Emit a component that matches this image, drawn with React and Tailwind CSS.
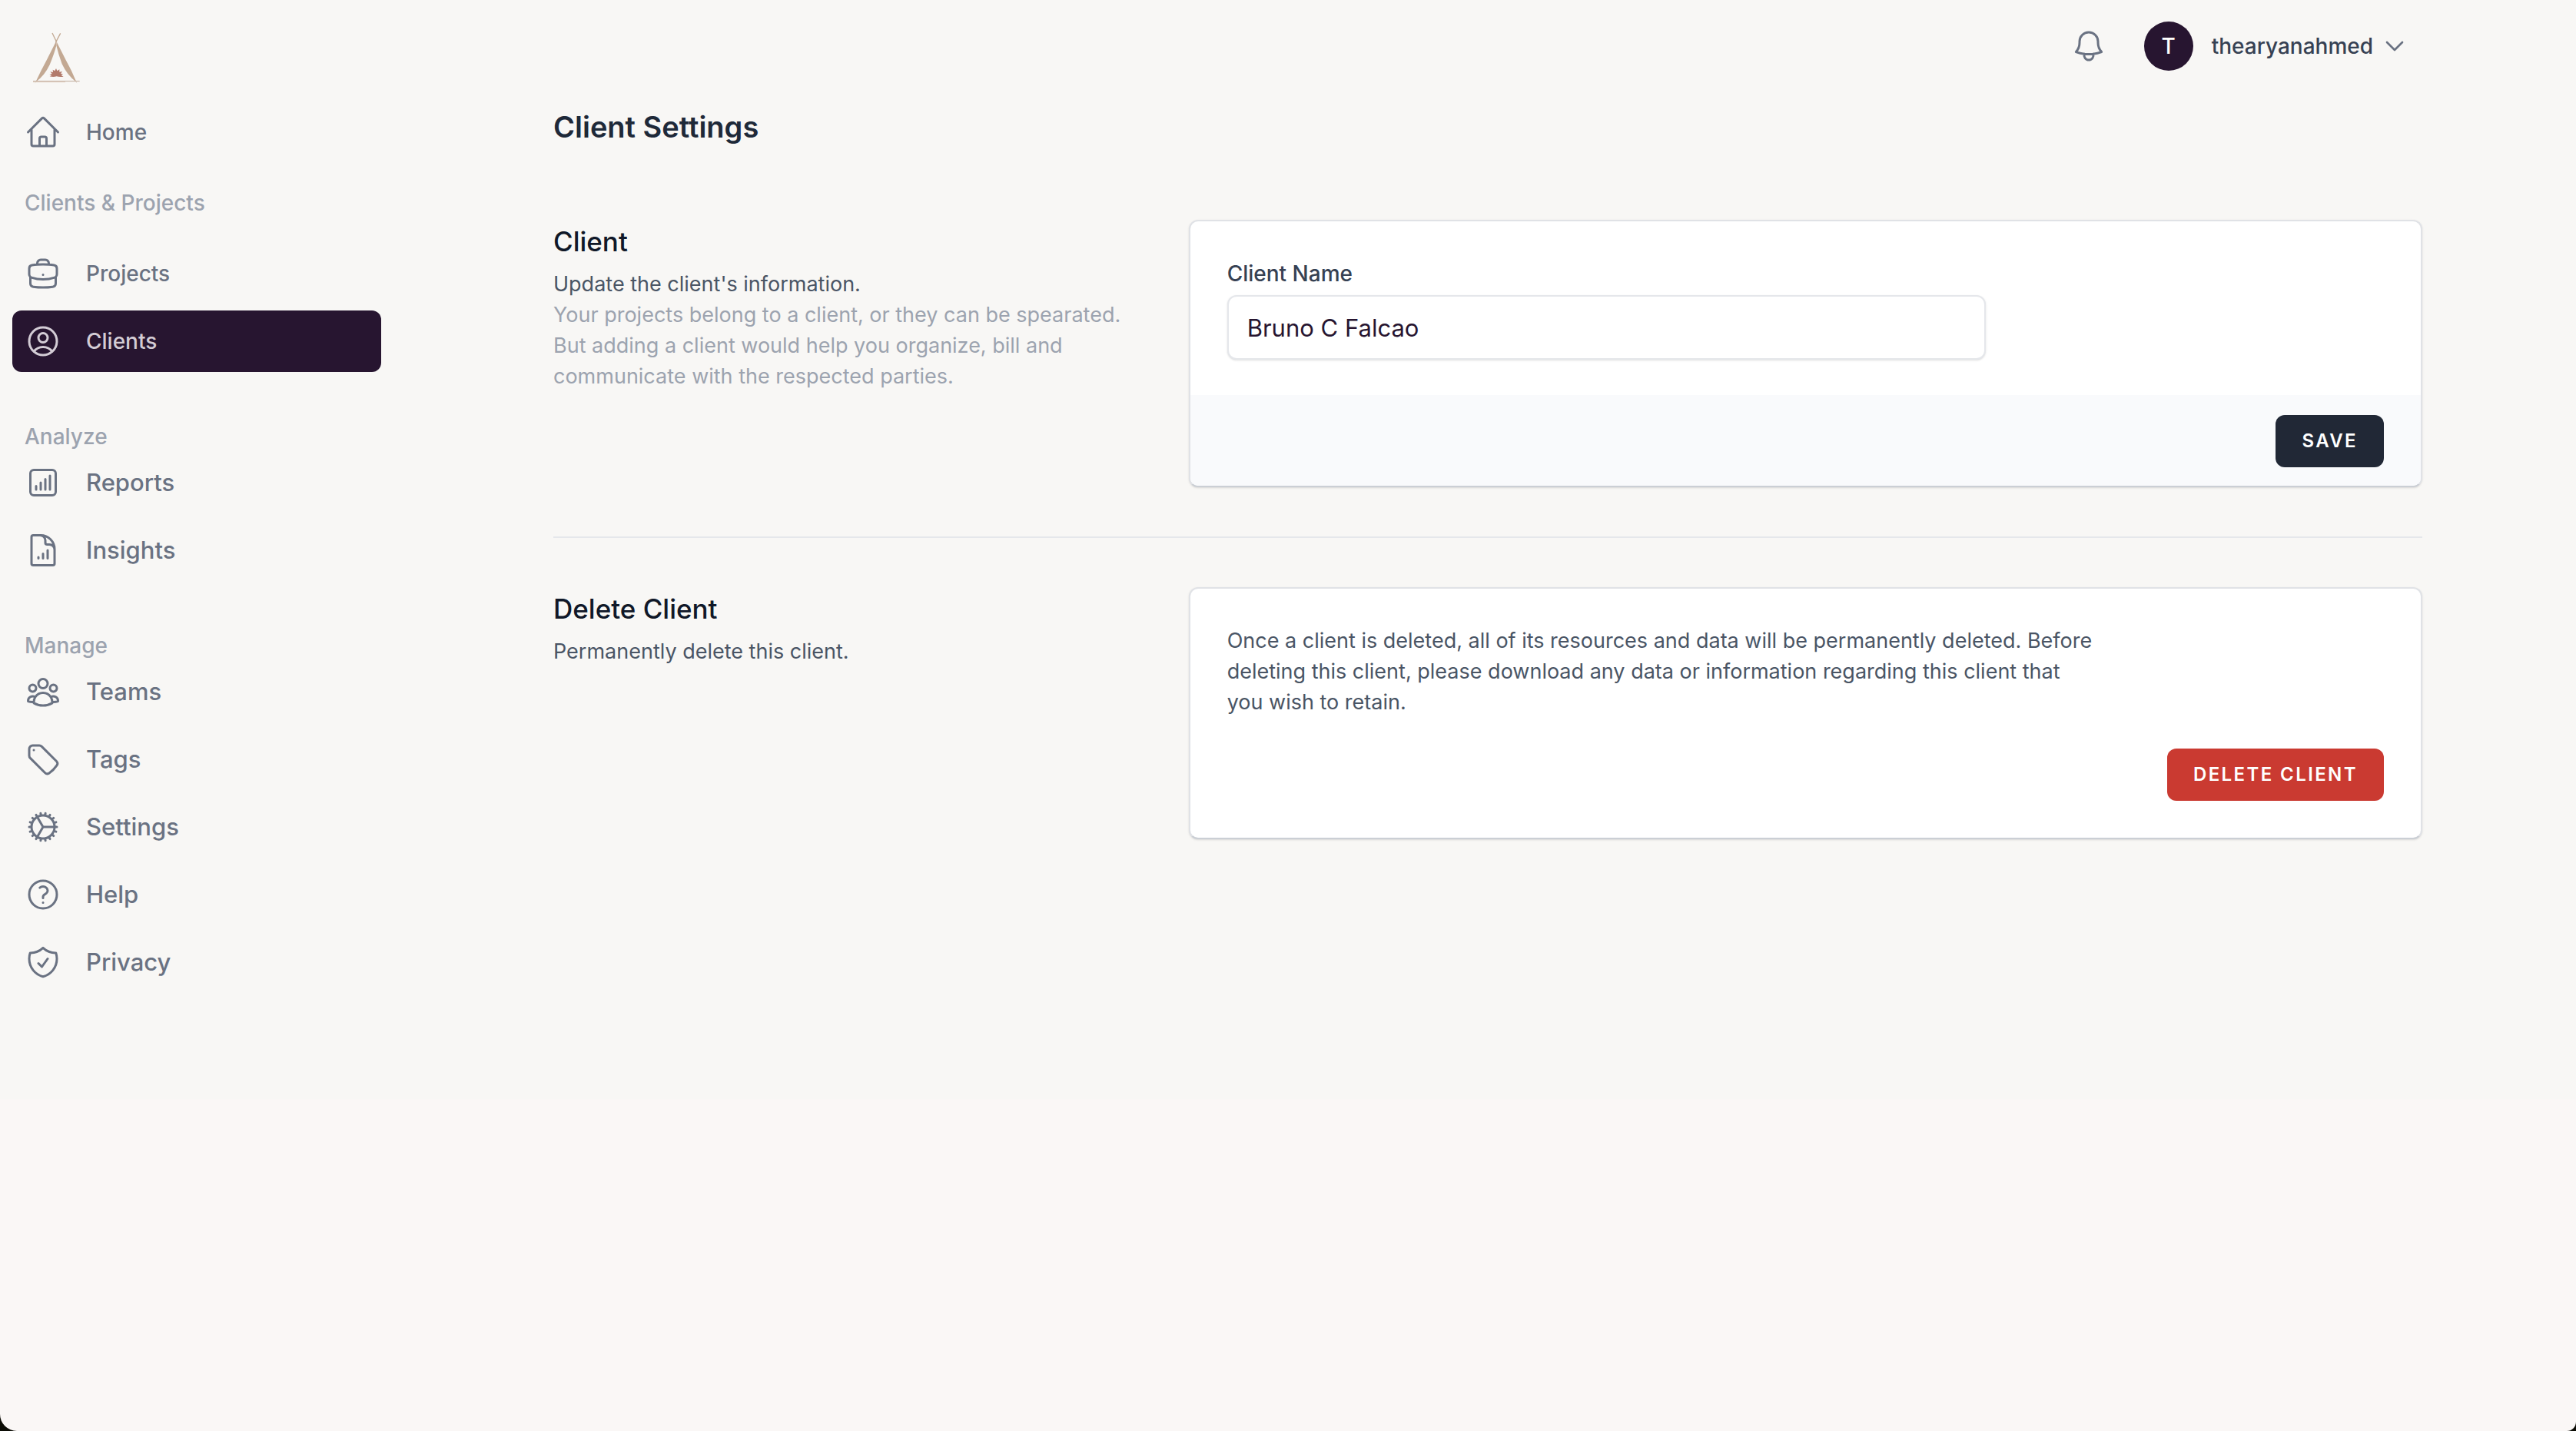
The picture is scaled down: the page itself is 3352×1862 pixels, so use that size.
import {
  HiOutlineHome,
  HiOutlineBriefcase,
  HiOutlineUserCircle,
  HiOutlineChartBarSquare,
  HiOutlineDocumentChartBar,
  HiOutlineUserGroup,
  HiOutlineTag,
  HiOutlineCog,
  HiOutlineQuestionMarkCircle,
  HiOutlineShieldCheck,
  HiOutlineBell,
  HiOutlineChevronDown,
} from "react-icons/hi2";

const analyze = [
  { label: "Reports", Icon: HiOutlineChartBarSquare },
  { label: "Insights", Icon: HiOutlineDocumentChartBar },
];

const manage = [
  { label: "Teams", Icon: HiOutlineUserGroup },
  { label: "Tags", Icon: HiOutlineTag },
  { label: "Settings", Icon: HiOutlineCog },
  { label: "Help", Icon: HiOutlineQuestionMarkCircle },
  { label: "Privacy", Icon: HiOutlineShieldCheck },
];

function Logo() {
  return (
    <svg viewBox="6 6 240 240" className="ml-8 size-20" fill="none" aria-hidden="true">
      <path d="M114 39 L131 74 M146 40 L127 76" stroke="#c3a993" strokeWidth="4" />
      <path d="M129 71 L92 145 Q80 168 70 187 L46 236 L51 229 Q84 205 104 163 Q121 122 130 88 Z" fill="#c3a993" />
      <path d="M130 71 L168 146 Q180 168 189 187 L211 236 L206 229 Q172 203 152 160 Q138 122 130 88 Z" fill="#c3a993" />
      <path d="M39 227 H221" stroke="#bfa999" strokeWidth="3" />
      <path d="M39 230 H165" stroke="#dccabb" strokeWidth="3" />
      <path
        d="M104 208 L112 204 L103 201 L113 198 L106 190 L117 192 L116 182 L124 187 L129 177 L133 187 L142 181 L142 191 L153 189 L147 197 L156 199 L149 204 L158 209 Q143 212 131 208 Q118 212 104 208 Z"
        fill="#b27a6b"
      />
    </svg>
  );
}

function NavItem({ label, Icon, active = false, small = false }) {
  return (
    <a
      href="#"
      aria-current={active ? "page" : undefined}
      className={`flex h-20 items-center gap-8 rounded-xl px-4 font-medium ${
        small ? "text-[28px]" : "text-[31px]"
      } ${active ? "bg-[#271530] text-[#d3ccd5]" : "text-gray-500"}`}
    >
      <Icon className="size-12 shrink-0" />
      {label}
    </a>
  );
}

function NavHeading({ children }) {
  return <h2 className="px-4 text-[28px] leading-10 font-medium text-[#9ca3af]">{children}</h2>;
}

function Sidebar() {
  return (
    <aside className="w-[512px] shrink-0 px-4 pt-8 pb-[138px]">
      <div className="-ml-4 mb-5">
        <Logo />
      </div>
      <nav className="flex flex-col gap-16">
        <div className="flex flex-col gap-8">
          <NavItem label="Home" Icon={HiOutlineHome} small />
          <NavHeading>Clients &amp; Projects</NavHeading>
          <div className="flex flex-col gap-2">
            <NavItem label="Projects" Icon={HiOutlineBriefcase} small />
            <NavItem label="Clients" Icon={HiOutlineUserCircle} small active />
          </div>
        </div>
        <div>
          <NavHeading>Analyze</NavHeading>
          <div className="flex flex-col gap-2">
            {analyze.map((item) => (
              <NavItem key={item.label} {...item} />
            ))}
          </div>
        </div>
        <div>
          <NavHeading>Manage</NavHeading>
          <div className="flex flex-col gap-2">
            {manage.map((item) => (
              <NavItem key={item.label} {...item} />
            ))}
          </div>
        </div>
      </nav>
    </aside>
  );
}

function Topbar() {
  return (
    <header className="flex h-[120px] items-center justify-end gap-12 pr-5">
      <button type="button" aria-label="Notifications" className="text-gray-500">
        <HiOutlineBell className="size-12" />
      </button>
      <button type="button" className="flex items-center text-[28px] leading-10 font-medium text-gray-700">
        <span className="mr-6 flex size-16 items-center justify-center rounded-full bg-[#271530] text-white">T</span>
        thearyanahmed
        <HiOutlineChevronDown strokeWidth={2} className="ml-3 size-8 text-gray-500" />
      </button>
    </header>
  );
}

function Section({ title, description, children }) {
  return (
    <section className="grid grid-cols-3 gap-12">
      <div>
        <h2 className="text-[35px] leading-14 font-medium text-gray-900">{title}</h2>
        <div className="mt-2 text-[27px] leading-10 text-gray-600">{description}</div>
      </div>
      <div className="col-span-2 overflow-hidden rounded-xl border-2 border-[#e0e2e6] border-b-[#cbcfd5] bg-white shadow-sm">
        {children}
      </div>
    </section>
  );
}

const buttonClass =
  "h-[68px] rounded-xl px-[34px] text-[24px] leading-8 font-semibold tracking-widest text-white uppercase";

export default function App() {
  return (
    <div className="flex min-h-screen flex-col bg-[#0c0d06] font-['Inter','Liberation_Sans',sans-serif]">
      <div className="flex-1 rounded-br-[12px] rounded-bl-[22px] bg-[#faf7f6]">
        <div className="flex bg-[#f8f7f5]">
          <Sidebar />
          <main className="min-w-0 flex-1 pr-[200px] pl-[208px]">
            <Topbar />
            <h1 className="mt-5 text-[38px] leading-[50px] font-semibold text-gray-800">Client Settings</h1>
            <div className="mt-24 flex flex-col gap-16">
              <Section
                title="Client"
                description={
                  <>
                    <p>Update the client's information.</p>
                    <p className="text-[#9ca3af]">
                      Your projects belong to a client, or they can be spearated. But adding a client would help you
                      organize, bill and communicate with the respected parties.
                    </p>
                  </>
                }
              >
                <form onSubmit={(e) => e.preventDefault()}>
                  <div className="grid grid-cols-6 gap-12 px-12 pt-12 pb-[46px]">
                    <div className="col-span-4">
                      <label htmlFor="client-name" className="block text-[28px] leading-10 font-medium text-gray-700">
                        Client Name
                      </label>
                      <input
                        id="client-name"
                        type="text"
                        defaultValue="Bruno C Falcao"
                        className="mt-2 block h-[84px] w-full rounded-xl border-2 border-gray-200 bg-white px-6 text-[31px] text-[#271530] shadow-sm"
                      />
                    </div>
                  </div>
                  <div className="flex justify-end bg-[#f9fafc] px-12 pt-[26px] pb-6">
                    <button type="submit" className={`${buttonClass} bg-[#212836]`}>
                      Save
                    </button>
                  </div>
                </form>
              </Section>
              <hr className="border-t-2 border-gray-200" />
              <Section title="Delete Client" description={<p>Permanently delete this client.</p>}>
                <div className="p-12">
                  <p className="max-w-[1132px] text-[27px] leading-10 text-gray-600">
                    Once a client is deleted, all of its resources and data will be permanently deleted. Before deleting
                    this client, please download any data or information regarding this client that you wish to retain.
                  </p>
                  <div className="mt-10 flex justify-end">
                    <button type="button" className={`${buttonClass} bg-[#ca3a31]`}>
                      Delete Client
                    </button>
                  </div>
                </div>
              </Section>
            </div>
          </main>
        </div>
      </div>
    </div>
  );
}
